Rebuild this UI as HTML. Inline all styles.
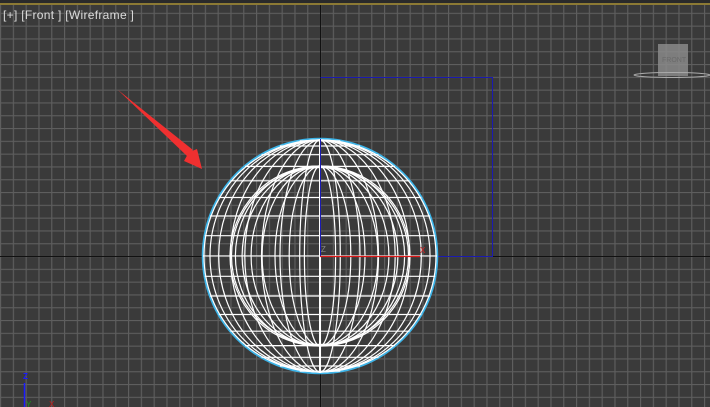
<!DOCTYPE html>
<html><head><style>
html,body{margin:0;padding:0;width:710px;height:407px;overflow:hidden;background:#3c3c3c}
.lbl{position:absolute;left:3px;top:8px;font:12px "Liberation Sans",sans-serif;color:#dcdcdc;letter-spacing:0.3px}
</style></head><body>
<svg width="710" height="407" style="position:absolute;left:0;top:0">
<defs>
<pattern id="g" x="0" y="0" width="12.8" height="12.8" patternUnits="userSpaceOnUse">
<path d="M0.5 0V12.8M0 0.5H12.8" stroke="#5e5e5e" stroke-width="1.3" fill="none"/>
</pattern>
</defs>
<rect width="710" height="407" fill="#3a3a3a"/>
<rect width="710" height="407" fill="url(#g)"/>
<rect width="710" height="3" fill="#2a2a2a"/>
<rect y="3" width="710" height="2" fill="#8c7a34"/>
<line x1="320.5" y1="5" x2="320.5" y2="407" stroke="#111" stroke-width="1"/>
<line x1="0" y1="256.5" x2="710" y2="256.5" stroke="#111" stroke-width="1"/>
<path d="M320.5 77.5H492.5V256.5H437" stroke="#1a1ab0" fill="none"/>
<g stroke="#fff" stroke-width="1.2" fill="none">
<circle cx="320" cy="256" r="117" stroke="#3db4e8" stroke-width="2.5"/>
<circle cx="320" cy="256" r="116"/>
<ellipse cx="320" cy="256" rx="20.3" ry="116"/>
<ellipse cx="320" cy="256" rx="40" ry="116"/>
<ellipse cx="320" cy="256" rx="58.5" ry="116"/>
<ellipse cx="320" cy="256" rx="75.2" ry="116"/>
<ellipse cx="320" cy="256" rx="89.6" ry="116"/>
<ellipse cx="320" cy="256" rx="101.3" ry="116"/>
<ellipse cx="320" cy="256" rx="110" ry="116"/>
<path d="M203 256H437
M204.8 235.7H435.2M204.8 276.3H435.2
M210 216H430M210 296H430
M218.7 197.5H421.3M218.7 314.5H421.3
M230.4 180.8H409.6M230.4 331.2H409.6
M245 166.4H395M245 345.6H395
M261.5 154.7H378.5M261.5 357.3H378.5
M280 146H360M280 366H360
M299.7 140.8H340.3M299.7 371.2H340.3"/>
<circle cx="320" cy="256" r="90"/>
<circle cx="320" cy="256" r="88.5"/>
<ellipse cx="320" cy="256" rx="15.6" ry="90"/>
<ellipse cx="320" cy="256" rx="30.8" ry="90"/>
<ellipse cx="320" cy="256" rx="45" ry="90"/>
<ellipse cx="320" cy="256" rx="57.9" ry="90"/>
<ellipse cx="320" cy="256" rx="68.9" ry="90"/>
<ellipse cx="320" cy="256" rx="77.9" ry="90"/>
<ellipse cx="320" cy="256" rx="84.6" ry="90"/>
<line x1="320" y1="139" x2="320" y2="373" stroke-width="2"/>
</g>
<line x1="320.5" y1="139" x2="320.5" y2="256" stroke="#1a1ab0"/>
<line x1="320" y1="256.5" x2="420" y2="256.5" stroke="#e01818" stroke-width="1.3"/>
<text x="321" y="252" font-family="Liberation Sans" font-size="8" fill="#888">Z</text>
<text x="420" y="253" font-family="Liberation Sans" font-size="8" fill="#e01818">X</text>
<path d="M118 90L189 152L184 161L202 169L197 149L192 151Z" fill="#f03030"/>
<path d="M118 90L193 150L187 156Z" fill="#f03030"/>
<rect x="658" y="44" width="30" height="32" fill="#8a8a8a" opacity="0.85"/>
<text x="662" y="62" font-family="Liberation Sans" font-size="7" fill="#6a6a6a">FRONT</text>
<ellipse cx="672" cy="75" rx="38" ry="2.5" fill="none" stroke="#aaa" stroke-width="1"/>
<line x1="24.5" y1="383" x2="24.5" y2="407" stroke="#1a1aff" stroke-width="1.5"/>
<text x="23" y="379" font-family="Liberation Sans" font-size="8" font-weight="bold" fill="#1a1aff">Z</text>
<text x="26" y="407" font-family="Liberation Sans" font-size="8" fill="#1a9a1a">Y</text>
<text x="49" y="407" font-family="Liberation Sans" font-size="8" fill="#c01818">X</text>
</svg>
<div class="lbl">[+] [Front ] [Wireframe ]</div>
</body></html>
